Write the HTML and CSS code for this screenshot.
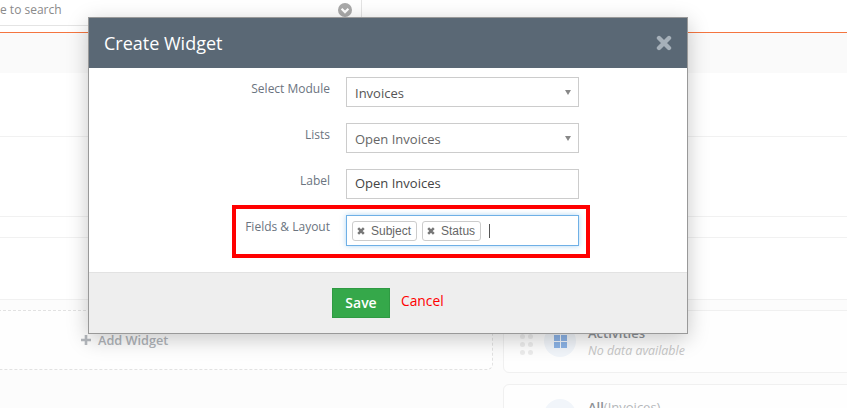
FILE: index.html
```html
<!DOCTYPE html>
<html lang="en">
<head>
<meta charset="utf-8">
<title>Create Widget</title>
<link rel="stylesheet" href="styles.css">
</head>
<body>
<div class="page">
  <header class="topbar">
    <div class="search">
      <span class="search-text">e to search</span>
      <svg class="search-icon" viewBox="0 0 14 14" aria-hidden="true"><circle cx="7" cy="7" r="7" fill="#a9a9a9"/><path d="M3.6 5.8 7 9.1l3.4-3.3" fill="none" stroke="#fff" stroke-width="2.2"/></svg>
    </div>
  </header>
  <div class="band"></div>
  <div class="rows">
    <div class="row r1"></div>
    <div class="row r2"></div>
    <div class="row r3"></div>
    <div class="row r4"></div>
  </div>
  <div class="lower">
    <div class="add-box">
      <svg class="plus" viewBox="0 0 10 10" aria-hidden="true"><path d="M5 0v10M0 5h10" stroke="#b4b8bd" stroke-width="2.6"/></svg>
      <span class="add-text">Add Widget</span>
    </div>
    <div class="cards">
      <div class="card">
        <div class="dots"><i></i><i></i><i></i><i></i><i></i><i></i></div>
        <div class="disc"><span class="tiles"><i></i><i></i><i></i><i></i></span></div>
        <div class="card-text">
          <div class="card-title">Activities</div>
          <div class="card-empty">No data available</div>
        </div>
      </div>
      <div class="card">
        <div class="dots"><i></i><i></i><i></i><i></i><i></i><i></i></div>
        <div class="disc"></div>
        <div class="card-text">
          <div class="card-title">All<span class="card-sub">(Invoices)</span></div>
        </div>
      </div>
    </div>
  </div>

  <section class="modal">
    <div class="modal-head">
      <h2 class="modal-title">Create Widget</h2>
      <svg class="close" viewBox="0 0 16 16" aria-hidden="true"><path d="M3 3l10 10M13 3 3 13" stroke="#a6b0b9" stroke-width="4.4" stroke-linecap="round"/></svg>
    </div>
    <div class="modal-body">
      <label class="field-label">Select Module</label>
      <div class="control select">Invoices<i class="caret"></i></div>
      <label class="field-label">Lists</label>
      <div class="control select muted">Open Invoices<i class="caret"></i></div>
      <label class="field-label">Label</label>
      <div class="control text-input">Open Invoices</div>
      <label class="field-label">Fields &amp; Layout</label>
      <div class="control tags">
        <span class="tag"><svg class="tag-x" viewBox="0 0 8 8" aria-hidden="true"><path d="M1.2 1.2l5.6 5.6M6.8 1.2 1.2 6.8" stroke="#777" stroke-width="2.5"/></svg>Subject</span>
        <span class="tag"><svg class="tag-x" viewBox="0 0 8 8" aria-hidden="true"><path d="M1.2 1.2l5.6 5.6M6.8 1.2 1.2 6.8" stroke="#777" stroke-width="2.5"/></svg>Status</span>
        <i class="cursor"></i>
      </div>
      <div class="highlight"></div>
    </div>
    <div class="modal-foot">
      <button class="save" type="button">Save</button>
      <a class="cancel">Cancel</a>
    </div>
  </section>
</div>
</body>
</html>
```
FILE: styles.css
```css
* { box-sizing: border-box; }
html, body { margin: 0; padding: 0; }
body { font-family: "Open Sans", "Liberation Sans", sans-serif; background: #fff; }
.page { position: relative; width: 847px; height: 408px; overflow: hidden; background: #fff; }

.topbar { height: 33px; border-bottom: 1px solid #f4753f; }
.search { width: 362px; height: 26px; display: flex; align-items: center; justify-content: space-between; padding: 0 9px 0 0; border-bottom: 1px solid #e4e4e4; border-right: 1px solid #e4e4e4; }
.search-text { font-size: 12px; color: #8a8a8a; margin-top: -6px; }
.search-icon { width: 14px; height: 14px; margin-top: -6px; }

.band { height: 40px; background: #fafafa; }
.rows { display: flex; flex-direction: column; }
.row { border-bottom: 1px solid #f1f1f1; }
.r1 { height: 64px; }
.r2 { height: 80px; }
.r3 { height: 21px; }
.r4 { height: 62px; }

.lower { display: flex; height: 108px; background: #fcfcfc; padding-top: 10px; }
.add-box { width: 501px; flex: none; height: 60px; margin-left: -8px; padding-left: 88px; display: flex; align-items: center; gap: 7px; border: 1px dashed #e2e2e2; border-radius: 6px; background: #fefefe; }
.plus { width: 10px; height: 10px; }
.add-text { font-size: 12.7px; font-weight: 600; color: #b0b4b9; }

.cards { margin-left: 10px; flex: 1; display: flex; flex-direction: column; gap: 11px; }
.card { height: 63px; flex: none; margin-right: -10px; padding: 14px 0 0 16px; display: flex; gap: 11px; border: 1px solid #f0f0f0; border-radius: 6px; background: #fefefe; }
.dots { width: 13px; height: 19px; margin-top: 9px; display: grid; grid-template-columns: 5px 5px; gap: 3px; }
.dots i { width: 5px; height: 5px; border-radius: 50%; background: #ececec; }
.disc { width: 32px; height: 32px; flex: none; border-radius: 50%; background: #f1f5fa; display: flex; align-items: center; justify-content: center; }
.tiles { display: grid; grid-template-columns: 6px 6px; gap: 1px; }
.tiles i { width: 6px; height: 6px; background: #8cb3e6; }
.card-text { margin: -1px 0 0 1px; }
.card-title { font-size: 13px; font-weight: 600; color: #8d9196; line-height: 18px; }
.card-sub { font-weight: 400; color: #b4b7ba; }
.card-empty { font-size: 12.4px; font-style: italic; color: #c6c6c6; line-height: 18px; }

.modal { position: absolute; left: 88px; top: 17px; width: 600px; height: 317px; display: flex; flex-direction: column; background: #fff; border: 1px solid #999; box-shadow: 0 5px 20px rgba(0,0,0,.22); }
.modal-head { height: 50px; flex: none; padding: 0 15px 0 15px; display: flex; align-items: center; justify-content: space-between; background: #5a6875; }
.modal-title { margin: 0; font-size: 18px; font-weight: 400; color: #fff; }
.close { width: 16px; height: 16px; margin-top: -1px; }

.modal-body { position: relative; height: 204px; flex: none; padding: 9px 108px 0 0; display: grid; grid-template-columns: 241px 233px; column-gap: 16px; row-gap: 16px; grid-auto-rows: 30px; }
.field-label { font-size: 12px; line-height: 24px; color: #6b7480; text-align: right; }
.control { position: relative; height: 30px; padding: 0 8px; display: flex; align-items: center; font-size: 13px; color: #444; border: 1px solid #ccc; background: #fff; }
.select { color: #555; padding-top: 2px; }
.muted { color: #666; }
.text-input { padding-bottom: 2px; }
.caret { position: absolute; right: 7px; top: 12px; border-left: 3px solid transparent; border-right: 3px solid transparent; border-top: 5px solid #888; }
.tags { height: 31px; padding: 0 5px; gap: 5px; border-color: #6fb0e6; box-shadow: 0 0 5px rgba(102,175,233,.5); font-family: "Liberation Sans", Arial, sans-serif; }
.tag { height: 20px; padding: 0 5px 0 4px; display: inline-flex; align-items: center; gap: 6px; font-size: 12px; color: #666; border: 1px solid #ccc; border-radius: 3px; background: #fff; }
.tag-x { width: 8px; height: 8px; }
.cursor { width: 1px; height: 14px; margin-left: 3px; background: #555; }
.highlight { position: absolute; left: 143px; top: 137px; width: 358px; height: 53px; border: 4px solid #f00; pointer-events: none; }

.modal-foot { flex: 1; padding: 15px 0 0 243px; display: flex; gap: 11px; background: #eee; border-top: 1px solid #e2e2e2; }
.save { width: 58px; height: 30px; padding: 0 0 2px; font: 600 14px "Open Sans", sans-serif; color: #fff; background: #35a84a; border: 1px solid #2f9a43; }
.cancel { font-size: 13.8px; line-height: 26px; color: #f00; }
```
